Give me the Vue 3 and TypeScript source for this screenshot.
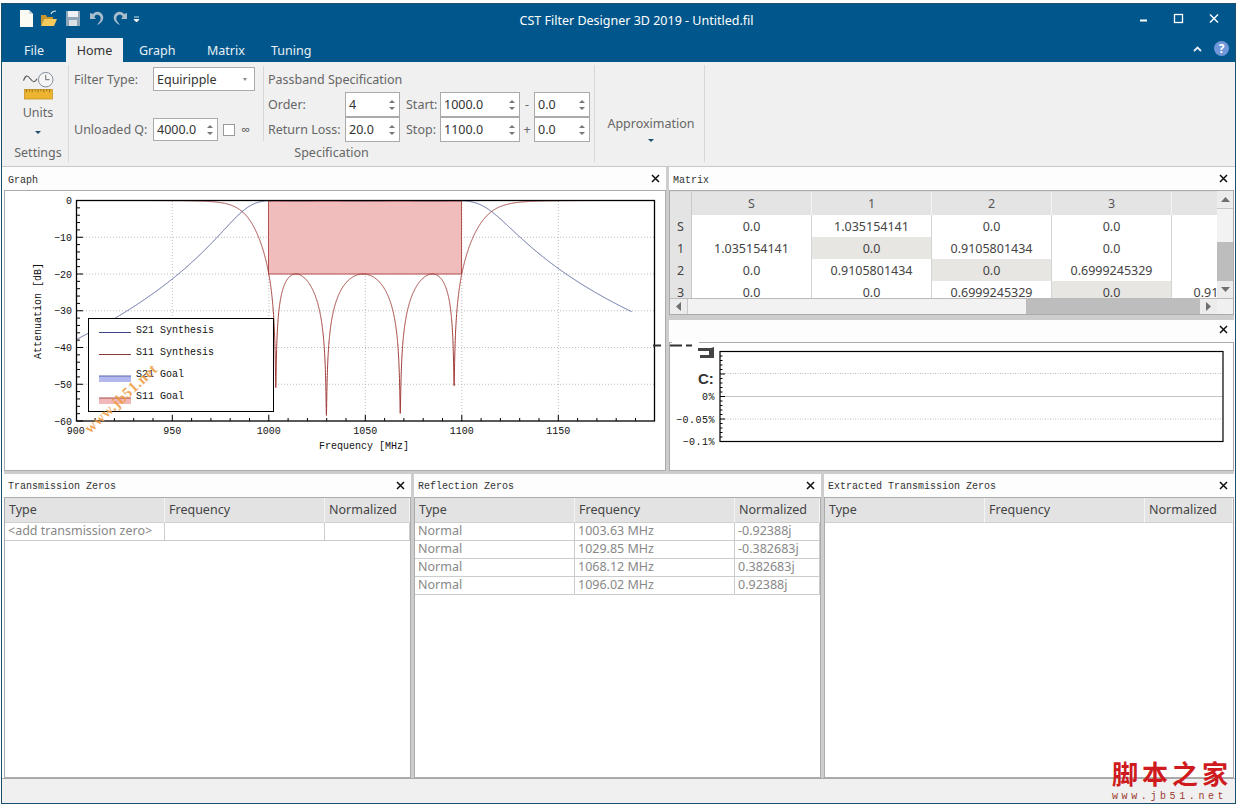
<script setup lang="ts">
const X = (f: number) => 75.8 + (f - 900) * 1.93
const Y = (db: number) => 200.5 - db * 3.675
const f0 = Math.sqrt(1000 * 1100)
const fbw = 100 / f0
const eps2 = 1 / 99
const zeros = [1003.63, 1029.85, 1068.12, 1096.02]
const floors = [-51, -58.5, -58, -50.5]
function t4(x: number) { return 8 * x ** 4 - 8 * x ** 2 + 1 }
function sample(fn: (f: number) => number) {
  const pts: string[] = []
  for (let f = 900.7; f <= 1188; f += 0.05) {
    pts.push(`${X(f).toFixed(2)},${Y(fn(f)).toFixed(2)}`)
  }
  return 'M' + pts.join('L')
}
function s21(f: number) {
  const x = (f / f0 - f0 / f) / fbw
  return -10 * Math.log10(1 + eps2 * t4(x) ** 2)
}
function s11(f: number) {
  const x = (f / f0 - f0 / f) / fbw
  const e = eps2 * t4(x) ** 2
  let idx = 0
  zeros.forEach((z, i) => { if (Math.abs(z - f) < Math.abs(zeros[idx] - f)) idx = i })
  return 10 * Math.log10(e / (1 + e) + 10 ** (floors[idx] / 10))
}
const s21Path = sample(s21)
const s11Path = sample(s11)

const yLabels = [0, -10, -20, -30, -40, -50, -60]
const xLabels = [900, 950, 1000, 1050, 1100, 1150]
let ticks = ''
for (let d = 0; d >= -60; d -= 2) ticks += `M77 ${Y(d)}h${d % 10 === 0 ? 6 : 3}`
for (let f = 910; f < 1198; f += 10) ticks += `M${X(f)} 421v${f % 50 === 0 ? -6 : -3}`
let lowTicks = ''
for (let i = 0; i <= 20; i++) lowTicks += `M721 ${351.5 + i * 4.5}h${i % 5 === 0 ? 5 : 2.5}`

const legend = ['S21 Synthesis', 'S11 Synthesis', 'S21 Goal', 'S11 Goal']

const matrixCols = ['S', '1', '2', '3', '']
const matrixRows = [
  { head: 'S', cells: ['0.0', '1.035154141', '0.0', '0.0', ''], sel: -1 },
  { head: '1', cells: ['1.035154141', '0.0', '0.9105801434', '0.0', ''], sel: 1 },
  { head: '2', cells: ['0.0', '0.9105801434', '0.0', '0.6999245329', ''], sel: 2 },
  { head: '3', cells: ['0.0', '0.0', '0.6999245329', '0.0', '0.9105801434'], sel: 3 },
]
const zeroCols = ['Type', 'Frequency', 'Normalized']
const panels = [
  { title: 'Transmission Zeros', rows: [['<add transmission zero>', '', '']] },
  {
    title: 'Reflection Zeros',
    rows: [
      ['Normal', '1003.63 MHz', '-0.92388j'],
      ['Normal', '1029.85 MHz', '-0.382683j'],
      ['Normal', '1068.12 MHz', '0.382683j'],
      ['Normal', '1096.02 MHz', '0.92388j'],
    ],
  },
  { title: 'Extracted Transmission Zeros', rows: [] as string[][] },
]
const tabs = ['Home', 'Graph', 'Matrix', 'Tuning']
</script>

<template>
  <div class="page">
    <div class="window">
      <header class="titlebar">
        <div class="quick">
          <svg width="130" height="20" viewBox="0 0 130 20">
            <path d="M2 2h9l4 4v13H2z" fill="#fbfbf4" />
            <path d="M11 2v4h4z" fill="#cfd6da" />
            <path d="M23 7h5l1 2h6v2h-9l-3 7z" fill="#c9962c" />
            <path d="M23 18l3-7h13l-3 7z" fill="#f5c95a" />
            <path d="M33 6c1-3 3-3 5-3" fill="none" stroke="#dfe8ee" stroke-width="1.2" />
            <path d="M48 3h14v15H48z" fill="#8fa6b8" />
            <path d="M50 3h10v6H50z" fill="#eef2f4" />
            <path d="M51 12h8v6h-8z" fill="#d9dfe3" />
            <path d="M72 5v6h6c-2-2-2-3 0-4 3-1 6 2 4 6l-3 4c5-2 7-6 6-9-1-4-7-6-10-2z" fill="#a9bccb" />
            <path d="M109 5v6h-6c2-2 2-3 0-4-3-1-6 2-4 6l3 4c-5-2-7-6-6-9 1-4 7-6 10-2z" fill="#a9bccb" />
            <path d="M116 9h5M116 11.5h5l-2.500 2.500z" fill="#fff" stroke="#fff" stroke-width="0.8" />
          </svg>
        </div>
        <div class="app-title">CST Filter Designer 3D 2019 - Untitled.fil</div>
        <div class="controls">
          <svg width="96" height="14" viewBox="0 0 96 14">
            <path d="M1 8.500h7" stroke="#fff" stroke-width="2" />
            <rect x="35.500" y="2.500" width="8" height="8" fill="none" stroke="#fff" stroke-width="1.300" />
            <path d="M71 2.500l8 8M79 2.500l-8 8" stroke="#fff" stroke-width="1.400" />
          </svg>
        </div>
      </header>

      <nav class="tabs">
        <span class="tab file">File</span>
        <span v-for="t in tabs" :key="t" class="tab" :class="{ active: t === 'Home' }">{{ t }}</span>
        <span class="tab-tools">
          <svg width="9" height="6" viewBox="0 0 9 6"><path d="M1 5l3.500-3.500L8 5" fill="none" stroke="#e6eef3" stroke-width="1.800" /></svg>
          <span class="help">?</span>
        </span>
      </nav>

      <section class="ribbon">
        <div class="group settings">
          <svg class="units-icon" width="34" height="30" viewBox="0 0 34 30">
            <path d="M2 10c2-6 4-6 7-2s5 4 7 0" fill="none" stroke="#555" stroke-width="1.200" />
            <circle cx="25" cy="9" r="7.500" fill="#f6f6f6" stroke="#7b8896" />
            <path d="M25 4v5h4" fill="none" stroke="#666" />
            <rect x="3" y="19" width="29" height="10" fill="#edb52f" stroke="#c18d1c" stroke-width="0.700" />
            <path d="M5 19v3M8 19v2M11 19v3M14 19v2M17 19v3M20 19v2M23 19v3M26 19v2M29 19v3" stroke="#7a5a10" stroke-width="0.800" />
          </svg>
          <span class="units-label">Units</span>
          <i class="drop"></i>
          <span class="caption">Settings</span>
        </div>

        <div class="group spec">
          <div class="spec-top">
            <div class="filter">
              <div class="line">
                <label class="filter-label">Filter Type:</label>
                <div class="combo"><span>Equiripple</span><i class="combo-arrow"></i></div>
              </div>
              <div class="line">
                <label class="filter-label">Unloaded Q:</label>
                <div class="spin q"><span>4000.0</span><span class="arrows"><i class="up"></i><i class="down"></i></span></div>
                <span class="check"></span>
                <span class="inf">∞</span>
              </div>
            </div>
            <div class="passband">
              <div class="pass-title">Passband Specification</div>
              <div class="pass-grid">
                <label>Order:</label>
                <div class="spin order"><span>4</span><span class="arrows"><i class="up"></i><i class="down"></i></span></div>
                <label>Start:</label>
                <div class="spin freq"><span>1000.0</span><span class="arrows"><i class="up"></i><i class="down"></i></span></div>
                <label class="sign">-</label>
                <div class="spin tol"><span>0.0</span><span class="arrows"><i class="up"></i><i class="down"></i></span></div>
                <label>Return Loss:</label>
                <div class="spin order"><span>20.0</span><span class="arrows"><i class="up"></i><i class="down"></i></span></div>
                <label>Stop:</label>
                <div class="spin freq"><span>1100.0</span><span class="arrows"><i class="up"></i><i class="down"></i></span></div>
                <label class="sign">+</label>
                <div class="spin tol"><span>0.0</span><span class="arrows"><i class="up"></i><i class="down"></i></span></div>
              </div>
            </div>
          </div>
          <span class="caption">Specification</span>
        </div>

        <div class="group approx">
          <span>Approximation</span>
          <i class="drop"></i>
        </div>
      </section>

      <main class="docks">
        <div class="top-row">
          <section class="panel graph-panel">
            <div class="panel-title"><span>Graph</span><svg class="close" width="9" height="9" viewBox="0 0 9 9"><path d="M1 1l7 7M8 1L1 8" stroke="#111" stroke-width="1.500" /></svg></div>
            <div class="box">
              <svg class="chart" width="659" height="279" viewBox="5 191 659 279">
                <g stroke="#bdbdbd" stroke-dasharray="1 2" fill="none">
                  <path d="M77 237.250H654M77 274H654M77 310.750H654M77 347.500H654M77 384.250H654" />
                  <path d="M172.300 201V421M268.800 201V421M365.300 201V421M461.800 201V421M558.300 201V421" />
                </g>
                <rect x="268.500" y="201" width="193" height="73" fill="#f1bcbc" stroke="#b24f4f" />
                <path :d="s21Path" fill="none" stroke="#4f5e9c" stroke-width="1" />
                <path :d="s11Path" fill="none" stroke="#a03c38" stroke-width="1" />
                <rect x="76.500" y="200.500" width="578" height="220.500" fill="none" stroke="#000" stroke-width="1.300" />
                <path :d="ticks" stroke="#000" fill="none" />
                <g class="mono">
                  <text v-for="d in yLabels" :key="d" x="72" :y="Y(d) + 3.500" text-anchor="end">{{ d === 0 ? '0' : '−' + -d }}</text>
                  <text v-for="f in xLabels" :key="f" :x="X(f)" y="434" text-anchor="middle">{{ f }}</text>
                  <text x="364" y="449" text-anchor="middle">Frequency [MHz]</text>
                  <text transform="translate(41 311) rotate(-90)" text-anchor="middle">Attenuation [dB]</text>
                </g>
                <rect x="88.500" y="318.500" width="185" height="93" fill="#fff" stroke="#000" />
                <path d="M99 332.500h32" stroke="#3a4684" />
                <path d="M99 354.500h32" stroke="#8a3a36" />
                <rect x="99" y="376" width="32" height="6" fill="#b3b8ee" />
                <path d="M99 376h32" stroke="#5c66b8" />
                <rect x="99" y="398" width="32" height="6" fill="#f0b8b8" />
                <path d="M99 398h32" stroke="#a84a4a" />
                <g class="mono">
                  <text v-for="(l, i) in legend" :key="l" x="136" :y="333 + i * 22">{{ l }}</text>
                </g>
                <text class="wm" transform="translate(90 434) rotate(-43)">www.jb51.net</text>
              </svg>
            </div>
          </section>

          <div class="right-col">
            <section class="panel matrix-panel">
              <div class="panel-title"><span>Matrix</span><svg class="close" width="9" height="9" viewBox="0 0 9 9"><path d="M1 1l7 7M8 1L1 8" stroke="#111" stroke-width="1.500" /></svg></div>
              <div class="box matrix-box">
                <div class="matrix-area">
                  <div class="matrix-clip">
                    <div class="mx-row mx-head">
                      <div class="mx-corner"></div>
                      <div v-for="(c, i) in matrixCols" :key="i" class="mx-col">{{ c }}</div>
                    </div>
                    <div v-for="r in matrixRows" :key="r.head" class="mx-row">
                      <div class="mx-rowhead">{{ r.head }}</div>
                      <div v-for="(c, i) in r.cells" :key="i" class="mx-cell" :class="{ sel: i === r.sel }">{{ c }}</div>
                    </div>
                  </div>
                  <div class="vscroll">
                    <div class="sb-btn"><svg width="9" height="5" viewBox="0 0 9 5"><path d="M4.500 0L9 5H0z" fill="#6f6f6f" /></svg></div>
                    <div class="v-thumb"></div>
                    <div class="v-track"></div>
                    <div class="sb-btn"><svg width="9" height="5" viewBox="0 0 9 5"><path d="M0 0h9L4.500 5z" fill="#6f6f6f" /></svg></div>
                  </div>
                </div>
                <div class="hscroll">
                  <div class="sb-btn h"><svg width="5" height="9" viewBox="0 0 5 9"><path d="M5 0v9L0 4.500z" fill="#6f6f6f" /></svg></div>
                  <div class="h-thumb"></div>
                  <div class="h-track"></div>
                  <div class="sb-btn h"><svg width="5" height="9" viewBox="0 0 5 9"><path d="M0 0v9l5-4.500z" fill="#6f6f6f" /></svg></div>
                  <div class="sb-corner"></div>
                </div>
              </div>
            </section>

            <section class="panel low-panel">
              <div class="panel-title low-title"><span></span><svg class="close" width="9" height="9" viewBox="0 0 9 9"><path d="M1 1l7 7M8 1L1 8" stroke="#111" stroke-width="1.500" /></svg></div>
              <div class="box">
                <svg class="chart" width="562" height="127" viewBox="671 343 562 127">
                  <path d="M721 373.500H1224M721 419H1224" stroke="#bdbdbd" stroke-dasharray="1 1.500" fill="none" />
                  <path d="M721 396.500H1224" stroke="#c4c4c4" />
                  <rect x="721" y="351.500" width="503" height="90" fill="none" stroke="#000" stroke-width="1.200" />
                  <path :d="lowTicks" stroke="#000" fill="none" />
                  <g class="mono low-labels">
                    <text x="716" y="399.500" text-anchor="end">0%</text>
                    <text x="716" y="423" text-anchor="end">−0.05%</text>
                    <text x="716" y="445" text-anchor="end">−0.1%</text>
                  </g>
                </svg>
              </div>
            </section>
          </div>
        </div>

        <div class="bottom-row">
          <section v-for="p in panels" :key="p.title" class="panel zero-panel">
            <div class="panel-title"><span>{{ p.title }}</span><svg class="close" width="9" height="9" viewBox="0 0 9 9"><path d="M1 1l7 7M8 1L1 8" stroke="#111" stroke-width="1.500" /></svg></div>
            <div class="box">
              <div class="zero-row zero-head">
                <div v-for="c in zeroCols" :key="c">{{ c }}</div>
              </div>
              <div v-for="(r, i) in p.rows" :key="i" class="zero-row zero-body">
                <div v-for="(c, j) in r" :key="j">{{ c }}</div>
              </div>
            </div>
          </section>
        </div>
      </main>

      <footer class="status"></footer>

      <svg class="artifact" width="75" height="52" viewBox="650 338 75 52">
        <rect x="671" y="339" width="27" height="6" fill="#fff" />
        <path d="M652 345.500h8M669 345.500h12M685 345.500h6" stroke="#333" stroke-width="2" />
        <path d="M697 348h13l3-1v11h-14v-3h9v-4h-11z" fill="#444" />
        <text x="697" y="384" class="artifact-text">C:</text>
      </svg>

      <div class="site-mark">
        <div class="site-cn">脚本之家</div>
        <div class="site-url">www.jb51.net</div>
      </div>
    </div>
  </div>
</template>

<style>
html, body { margin: 0; background: #fff; }
</style>

<style scoped>
.page {
  width: 1238px;
  height: 806px;
  box-sizing: border-box;
  padding: 3px 2px 2px 1px;
  overflow: hidden;
  font-family: "Noto Sans", "Open Sans", sans-serif;
  font-size: 12.5px;
  color: #444;
}
.window {
  position: relative;
  height: 801px;
  box-sizing: border-box;
  border: 1px solid #1c4e6e;
  display: flex;
  flex-direction: column;
  background: #fff;
}
.titlebar {
  height: 34px;
  flex: none;
  background: #01578c;
  display: flex;
  align-items: center;
  position: relative;
  color: #fff;
}
.quick { margin-left: 16px; margin-bottom: 6px; display: flex; }
.app-title {
  position: absolute;
  left: 0;
  right: 0;
  text-align: center;
  top: 8px;
  line-height: 18px;
  transform: translateX(18px);
}
.controls { position: absolute; left: 1137px; top: 8px; display: flex; }
.tabs {
  height: 24px;
  flex: none;
  background: #01578c;
  display: flex;
  align-items: stretch;
  color: #e9f0f5;
  position: relative;
}
.tab { line-height: 25px; padding-left: 16px; box-sizing: border-box; white-space: nowrap; width: 68px; }
.tab.file { width: 64px; padding-left: 22px; }
.tab.active { background: #f0f0f0; color: #333; padding: 0; width: 57px; text-align: center; }
.tab:nth-child(4) { width: 64px; }
.tab-tools { position: absolute; right: 6px; top: 3px; display: flex; align-items: center; gap: 12px; }
.help {
  width: 15px;
  height: 15px;
  border-radius: 50%;
  background: #6f97da;
  color: #fff;
  font-size: 12px;
  font-weight: 700;
  line-height: 15px;
  text-align: center;
}
.ribbon {
  height: 105px;
  flex: none;
  box-sizing: border-box;
  background: #f0f0f0;
  border-bottom: 1px solid #c8c8c8;
  display: flex;
  color: #666;
}
.group { position: relative; box-sizing: border-box; margin-top: 3px; height: 97px; border-right: 1px solid #d8d8d8; }
.settings {
  width: 67px;
  padding-left: 6px;
  display: flex;
  flex-direction: column;
  align-items: center;
}
.units-icon { margin-top: 6px; margin-left: -1px; }
.units-label { margin-top: 4px; line-height: 18px; }
.drop {
  width: 0;
  height: 0;
  border-left: 3px solid transparent;
  border-right: 3px solid transparent;
  border-top: 3px solid #1c4e6e;
  display: block;
}
.settings .drop { margin-top: 9px; }
.caption { line-height: 18px; color: #666; }
.settings .caption { margin-top: 10px; }
.spec {
  width: 526px;
  display: flex;
  flex-direction: column;
  align-items: center;
}
.spec-top { display: flex; width: 100%; height: 75px; margin-top: 1px; margin-bottom: 3px; }
.spec .caption { margin-top: 0; }
.filter {
  width: 195px;
  box-sizing: border-box;
  padding: 1px 0 0 5px;
  border-right: 1px solid #d8d8d8;
  display: flex;
  flex-direction: column;
  justify-content: space-between;
}
.line { display: flex; align-items: center; }
.filter-label { width: 79px; flex: none; white-space: nowrap; }
.combo {
  width: 102px;
  height: 24px;
  box-sizing: border-box;
  border: 1px solid #aaa;
  background: #fff;
  color: #333;
  display: flex;
  align-items: center;
  justify-content: space-between;
  padding: 0 7px 0 3px;
}
.combo-arrow {
  width: 0;
  height: 0;
  border-left: 2.500px solid transparent;
  border-right: 2.500px solid transparent;
  border-top: 3px solid #888;
}
.spin {
  box-sizing: border-box;
  border: 1px solid #aaa;
  background: #fff;
  color: #333;
  display: flex;
  align-items: center;
  justify-content: space-between;
  padding-left: 3px;
  height: 25px;
}
.spin.q { width: 65px; height: 23px; }
.spin.order { width: 55px; }
.spin.freq { width: 80px; }
.spin.tol { width: 56px; }
.arrows { display: flex; flex-direction: column; gap: 4px; width: 15px; flex: none; align-items: center; }
.up, .down { width: 0; height: 0; border-left: 3px solid transparent; border-right: 3px solid transparent; }
.up { border-bottom: 3px solid #777; }
.down { border-top: 3px solid #777; }
.check { width: 12px; height: 12px; box-sizing: border-box; border: 1px solid #999; background: #fff; margin-left: 5px; }
.inf { margin-left: 6px; color: #555; }
.passband { padding: 5px 0 0 4px; flex: 1; }
.pass-title { line-height: 18px; height: 18px; white-space: nowrap; }
.pass-grid {
  margin-top: 3px;
  display: grid;
  grid-template-columns: 77px 55px 40px 80px 14px 56px;
  grid-auto-rows: 25px;
  align-items: center;
}
.pass-grid label { white-space: nowrap; }
.pass-grid label:nth-child(3), .pass-grid label:nth-child(9) { padding-left: 6px; }
.sign { text-align: center; }
.approx {
  width: 110px;
  display: flex;
  flex-direction: column;
  align-items: center;
  padding: 50px 0 0 3px;
}
.approx span { line-height: 18px; white-space: nowrap; }
.approx .drop { margin-top: 6px; }
.docks { flex: 1; min-height: 0; display: flex; flex-direction: column; background: #fff; padding: 0 1px 0 2px; }
.top-row {
  height: 307px;
  flex: none;
  box-sizing: border-box;
  border-bottom: 3px solid #cdcdcd;
  display: flex;
}
.panel { display: flex; flex-direction: column; min-width: 0; box-sizing: border-box; }
.graph-panel { width: 665px; flex: none; border-right: 3px solid #cdcdcd; }
.panel-title {
  height: 23px;
  flex: none;
  display: flex;
  align-items: center;
  justify-content: space-between;
  padding: 0 6px 0 4px;
  box-sizing: border-box;
  font-family: "Liberation Mono", monospace;
  font-size: 10px;
  color: #333;
  background: #fdfdfd;
}
.panel-title span { padding-top: 3px; }
.zero-panel .panel-title span { padding-top: 1px; }
.low-title { height: 22px; padding-bottom: 4px; }
.close { flex: none; }
.box { flex: 1; min-height: 0; border: 1px solid #ababab; background: #fff; overflow: hidden; }
.chart { display: block; }
.mono text { font-family: "Liberation Mono", monospace; font-size: 10px; fill: #111; }
.low-labels text { letter-spacing: 0.500px; }
.wm { font-family: "Liberation Serif", serif; font-size: 15px; font-weight: 700; fill: #ee9a3c; letter-spacing: 0.500px; opacity: 0.85; }
.right-col { flex: 1; min-width: 0; display: flex; flex-direction: column; }
.matrix-panel { height: 153px; flex: none; border-bottom: 5px solid #cdcdcd; }
.matrix-box { display: flex; flex-direction: column; background: #f2f2f2; }
.matrix-area { height: 107px; flex: none; display: flex; }
.matrix-clip { width: 547px; overflow: hidden; background: #fff; border-top: 1px solid #dcdcdc; box-sizing: border-box; }
.mx-row {
  display: grid;
  grid-template-columns: 22px repeat(5, 120px);
  height: 22px;
  line-height: 23px;
  text-align: center;
}
.mx-head { height: 23px; line-height: 23px; color: #555; }
.mx-corner, .mx-col, .mx-rowhead {
  background: #e4e4e4;
  border-right: 1px solid #c8c8c8;
  border-bottom: 1px solid #c8c8c8;
  box-sizing: border-box;
}
.mx-col { border-right-color: #f4f4f4; }
.mx-cell { border-right: 1px solid #d4d4d4; border-bottom: 1px solid #d4d4d4; box-sizing: border-box; white-space: nowrap; background: #fff; }
.mx-cell:last-child { padding-left: 6px; }
.mx-cell.sel { background: #e8e6e3; }
.vscroll { flex: 1; display: flex; flex-direction: column; background: #f0f0f0; }
.sb-btn { height: 17px; flex: none; display: flex; align-items: center; justify-content: center; background: #ececec; }
.sb-btn.h { width: 17px; height: auto; }
.v-thumb { height: 34px; flex: none; background: #f2f2f2; border-top: 1px solid #c8c8c8; box-sizing: border-box; }
.v-track { flex: 1; background: #bdbdbd; }
.hscroll { flex: 1; display: flex; background: #ececec; border-top: 1px solid #bbb; }
.h-thumb { width: 339px; flex: none; background: #f2f2f2; border-left: 1px solid #c8c8c8; box-sizing: border-box; }
.h-track { flex: 1; background: #bdbdbd; }
.sb-corner { width: 16px; flex: none; background: #f0f0f0; }
.low-panel { flex: 1; min-height: 0; }
.bottom-row { flex: 1; min-height: 0; display: grid; grid-template-columns: 410px 410px 1fr; }
.zero-panel { border-right: 3px solid #cdcdcd; }
.zero-panel:last-child { border-right: none; }
.zero-row { display: grid; grid-template-columns: 160px 160px 1fr; }
.zero-row > div { box-sizing: border-box; padding-left: 4px; white-space: nowrap; }
.zero-head { height: 25px; line-height: 23px; background: #e3e3e3; color: #444; }
.zero-head > div { border-right: 1px solid #f4f4f4; border-bottom: 1px solid #cfcfcf; }
.zero-body { height: 18px; line-height: 15px; color: #888; }
.zero-body > div { border-right: 1px solid #ccc; border-bottom: 1px solid #ccc; padding-left: 3px; }
.status { height: 25px; flex: none; box-sizing: border-box; background: #f0f0f0; border-top: 1px solid #a8a8a8; }
.artifact { position: absolute; left: 649px; top: 334px; pointer-events: none; }
.artifact-text { font-family: "Liberation Sans", sans-serif; font-size: 15px; font-weight: 700; fill: #333; }
.site-mark { position: absolute; left: 1110px; top: 753px; width: 118px; pointer-events: none; text-align: left; }
.site-cn { font-family: "Noto Sans CJK SC", sans-serif; font-weight: 700; font-size: 26px; line-height: 32px; letter-spacing: 4px; color: #cf1a1e; white-space: nowrap; }
.site-url { font-family: "Liberation Mono", monospace; font-size: 10px; line-height: 12px; margin-top: 2px; letter-spacing: 3.600px; color: #9c3a2e; white-space: nowrap; }
</style>
